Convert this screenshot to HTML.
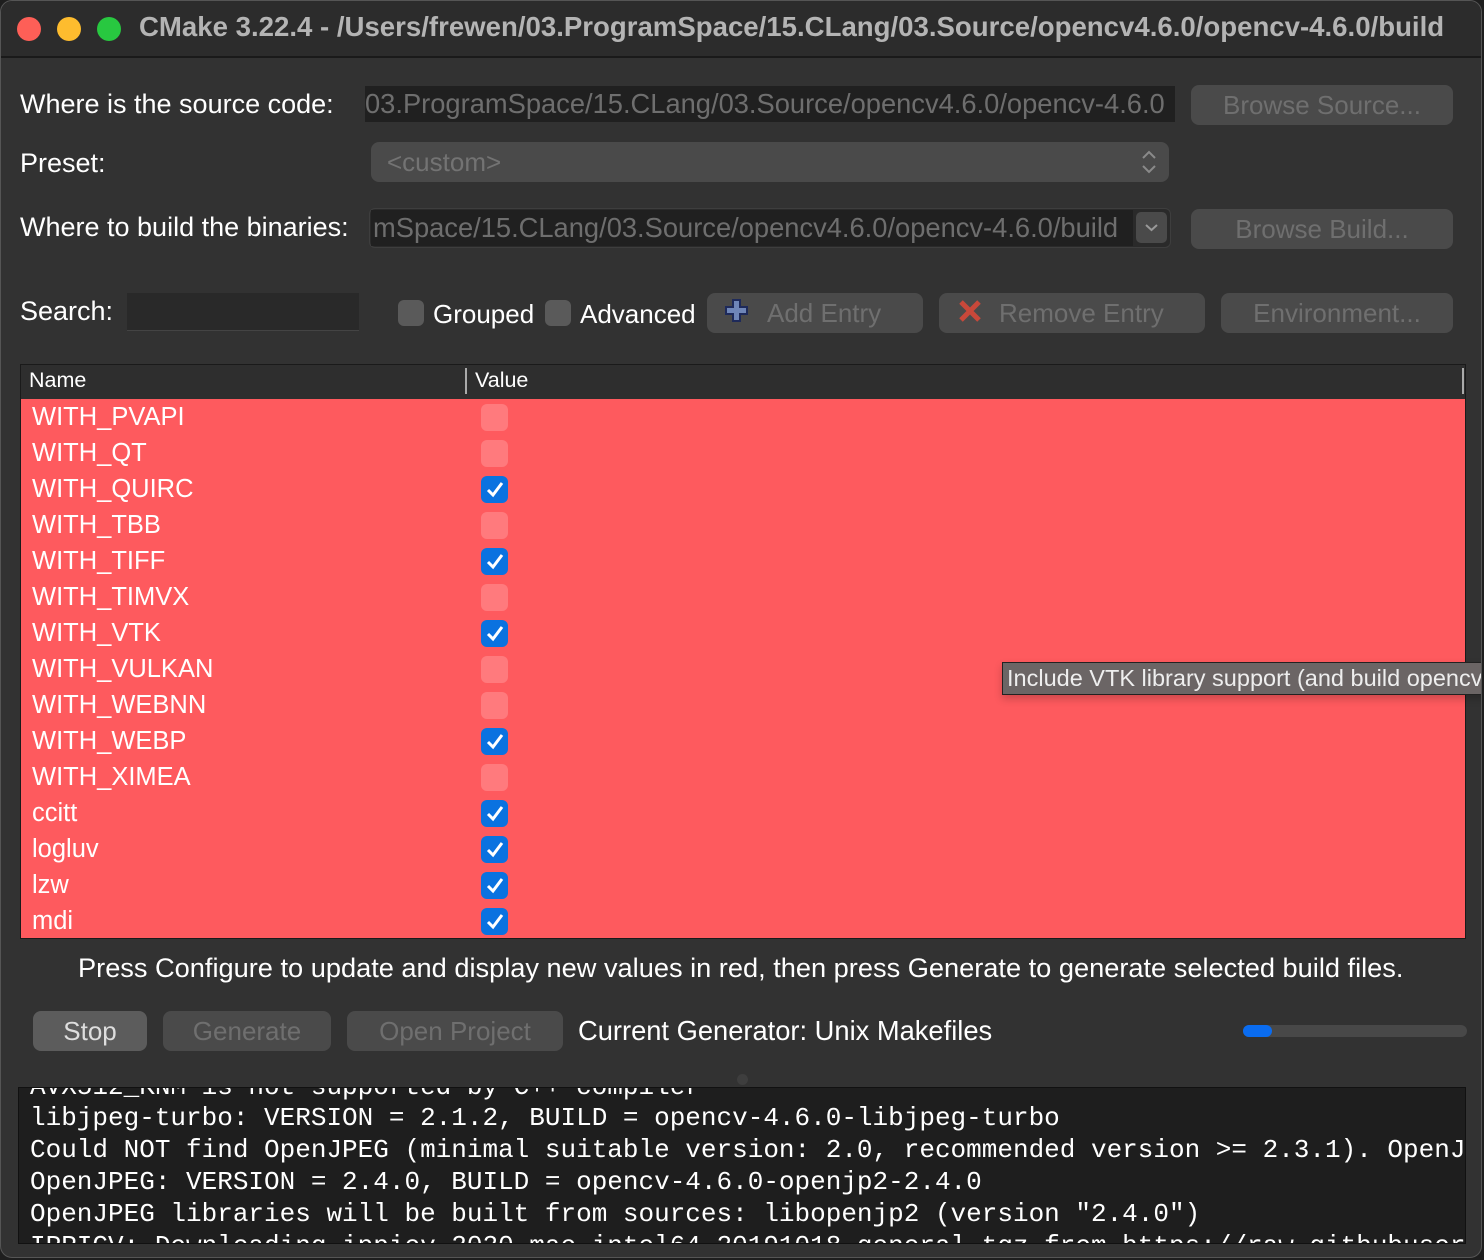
<!DOCTYPE html>
<html><head><meta charset="utf-8"><style>
*{box-sizing:border-box;margin:0;padding:0}
body{width:1484px;height:1260px;background:#1e1e1e;font-family:"Liberation Sans",sans-serif;overflow:hidden;position:relative}
.win{position:absolute;left:0;top:0;width:1482px;height:1258px;background:#323232;border-radius:12px;overflow:hidden;border:1px solid #555}
.title{position:absolute;left:0;top:0;width:100%;height:57px;background:#2c2c2c;border-bottom:2px solid #1a1a1a}
.dot{position:absolute;top:16px;width:24px;height:24px;border-radius:50%}
.ttext{position:absolute;left:138px;top:10px;color:#b4b4b4;font-weight:bold;font-size:27.6px;white-space:nowrap}
.a{position:absolute;white-space:nowrap}
.lbl{color:#fff;font-size:27px}
.field{background:#202020;color:#6e6e6e;font-size:27.3px;overflow:hidden;height:36px;line-height:36px}
.btn{position:absolute;background:#4a4a4a;border-radius:8px;color:#6f6f6f;font-size:26px;text-align:center;height:40px;line-height:40px}
.cb{position:absolute;width:26px;height:26px;border-radius:6px;background:#5a5a5a}
.row{position:absolute;left:31px;color:#fff;font-size:25.5px}
.rcb{position:absolute;left:480px;width:27px;height:27px;border-radius:6px;background:#ff7a7d}
.rcb.on{background:#0a72e0}
.mono{position:absolute;left:29px;font-family:"Liberation Mono",monospace;font-size:26px;color:#fff;white-space:nowrap}
</style></head><body>
<div class="win">
<div class="title">
<div class="dot" style="left:16px;background:#fe5f57"></div>
<div class="dot" style="left:56px;background:#febc2e"></div>
<div class="dot" style="left:96px;background:#28c840"></div>
<div class="ttext">CMake 3.22.4 - /Users/frewen/03.ProgramSpace/15.CLang/03.Source/opencv4.6.0/opencv-4.6.0/build</div>
</div>

<div class="a lbl" style="left:19px;top:88px">Where is the source code:</div>
<div class="a field" style="left:364px;top:85px;width:810px;padding-left:0">03.ProgramSpace/15.CLang/03.Source/opencv4.6.0/opencv-4.6.0</div>
<div class="btn" style="left:1190px;top:84px;width:262px">Browse Source...</div>

<div class="a lbl" style="left:19px;top:147px">Preset:</div>
<div class="a" style="left:370px;top:141px;width:798px;height:40px;background:#4a4a4a;border-radius:8px;color:#737373;font-size:26px;line-height:40px;padding-left:16px">&lt;custom&gt;
<svg style="position:absolute;right:12px;top:8px" width="16" height="24" viewBox="0 0 16 24"><path d="M2 8 L8 2 L14 8 M2 16 L8 22 L14 16" fill="none" stroke="#8a8a8a" stroke-width="2"/></svg></div>

<div class="a lbl" style="left:19px;top:211px">Where to build the binaries:</div>
<div class="a" style="left:368px;top:207px;width:802px;height:40px;background:#2a2a2a;border:1px solid #3e3e3e;border-radius:6px"></div>
<div class="a field" style="left:370px;top:209px;width:762px;padding-left:2px">mSpace/15.CLang/03.Source/opencv4.6.0/opencv-4.6.0/build</div>
<div class="a" style="left:1135px;top:211px;width:31px;height:31px;background:#4a4a4a;border-radius:5px"><svg width="31" height="31"><path d="M10 13 L15.5 18 L21 13" fill="none" stroke="#999" stroke-width="2"/></svg></div>
<div class="btn" style="left:1190px;top:208px;width:262px">Browse Build...</div>

<div class="a lbl" style="left:19px;top:295px">Search:</div>
<div class="a" style="left:126px;top:292px;width:232px;height:38px;background:#292929;border-bottom:1px solid #444"></div>
<div class="cb" style="left:397px;top:299px"></div>
<div class="a lbl" style="left:432px;top:298px;font-size:26px">Grouped</div>
<div class="cb" style="left:544px;top:299px"></div>
<div class="a lbl" style="left:579px;top:298px;font-size:26px">Advanced</div>
<div class="btn" style="left:706px;top:292px;width:216px;text-align:left;padding-left:60px">Add Entry</div>
<svg class="a" style="left:722px;top:296px" width="28" height="28" viewBox="0 0 28 28"><path d="M10 3h7v7h7v7h-7v7h-7v-7H3v-7h7z" fill="#6f86b8" stroke="#1e2a5a" stroke-width="2"/></svg>
<div class="btn" style="left:938px;top:292px;width:266px;text-align:left;padding-left:60px">Remove Entry</div>
<svg class="a" style="left:956px;top:297px" width="26" height="26" viewBox="0 0 26 26"><path d="M4 4L22 22M22 4L4 22" stroke="#c8483a" stroke-width="5"/></svg>
<div class="btn" style="left:1220px;top:292px;width:232px">Environment...</div>

<div class="a" style="left:19px;top:363px;width:1446px;height:575px;background:#fe5a5e;border:1px solid #1a1a1a"></div>
<div class="a" style="left:20px;top:364px;width:1444px;height:34px;background:#2e2e2e"></div>
<div class="a" style="left:28px;top:367px;color:#fff;font-size:21.5px">Name</div>
<div class="a" style="left:464px;top:367px;width:2px;height:26px;background:#aaa"></div>
<div class="a" style="left:474px;top:367px;color:#fff;font-size:21.5px">Value</div>
<div class="a" style="left:1461px;top:367px;width:2px;height:26px;background:#aaa"></div>

<div class="row" style="top:402px">WITH_PVAPI</div><div class="rcb" style="top:403px"></div>
<div class="row" style="top:438px">WITH_QT</div><div class="rcb" style="top:439px"></div>
<div class="row" style="top:474px">WITH_QUIRC</div><div class="rcb on" style="top:475px"><svg width="27" height="27"><path d="M7 14l5 5 9-12" fill="none" stroke="#fff" stroke-width="3"/></svg></div>
<div class="row" style="top:510px">WITH_TBB</div><div class="rcb" style="top:511px"></div>
<div class="row" style="top:546px">WITH_TIFF</div><div class="rcb on" style="top:547px"><svg width="27" height="27"><path d="M7 14l5 5 9-12" fill="none" stroke="#fff" stroke-width="3"/></svg></div>
<div class="row" style="top:582px">WITH_TIMVX</div><div class="rcb" style="top:583px"></div>
<div class="row" style="top:618px">WITH_VTK</div><div class="rcb on" style="top:619px"><svg width="27" height="27"><path d="M7 14l5 5 9-12" fill="none" stroke="#fff" stroke-width="3"/></svg></div>
<div class="row" style="top:654px">WITH_VULKAN</div><div class="rcb" style="top:655px"></div>
<div class="row" style="top:690px">WITH_WEBNN</div><div class="rcb" style="top:691px"></div>
<div class="row" style="top:726px">WITH_WEBP</div><div class="rcb on" style="top:727px"><svg width="27" height="27"><path d="M7 14l5 5 9-12" fill="none" stroke="#fff" stroke-width="3"/></svg></div>
<div class="row" style="top:762px">WITH_XIMEA</div><div class="rcb" style="top:763px"></div>
<div class="row" style="top:798px">ccitt</div><div class="rcb on" style="top:799px"><svg width="27" height="27"><path d="M7 14l5 5 9-12" fill="none" stroke="#fff" stroke-width="3"/></svg></div>
<div class="row" style="top:834px">logluv</div><div class="rcb on" style="top:835px"><svg width="27" height="27"><path d="M7 14l5 5 9-12" fill="none" stroke="#fff" stroke-width="3"/></svg></div>
<div class="row" style="top:870px">lzw</div><div class="rcb on" style="top:871px"><svg width="27" height="27"><path d="M7 14l5 5 9-12" fill="none" stroke="#fff" stroke-width="3"/></svg></div>
<div class="row" style="top:906px">mdi</div><div class="rcb on" style="top:907px"><svg width="27" height="27"><path d="M7 14l5 5 9-12" fill="none" stroke="#fff" stroke-width="3"/></svg></div>

<div class="a" style="left:1001px;top:661px;width:490px;height:33px;background:#6b6565;border:1px solid #222;color:#eee;font-size:23.5px;line-height:31px;padding-left:4px;overflow:hidden;box-shadow:0 4px 8px rgba(0,0,0,.2)">Include VTK library support (and build opencv_viz)</div>

<div class="a" style="left:77px;top:951px;color:#fff;font-size:27.2px">Press Configure to update and display new values in red, then press Generate to generate selected build files.</div>

<div class="btn" style="left:32px;top:1010px;width:114px;background:#5c5c5c;color:#ddd">Stop</div>
<div class="btn" style="left:162px;top:1010px;width:168px">Generate</div>
<div class="btn" style="left:346px;top:1010px;width:216px">Open Project</div>
<div class="a lbl" style="left:577px;top:1014px;font-size:27.3px">Current Generator: Unix Makefiles</div>
<div class="a" style="left:1242px;top:1024px;width:224px;height:12px;background:#484848;border-radius:6px"></div>
<div class="a" style="left:1242px;top:1024px;width:29px;height:12px;background:#0a6cf0;border-radius:6px"></div>
<div class="a" style="left:736px;top:1073px;width:11px;height:11px;border-radius:50%;background:#3e3e3e"></div>

<div class="a" style="left:17px;top:1086px;width:1448px;height:157px;background:#1e1e1e;border:1px solid #111;overflow:hidden">
<div class="mono" style="left:11px;top:-16px">AVX512_KNM is not supported by C++ compiler</div>
<div class="mono" style="left:11px;top:15px">libjpeg-turbo: VERSION = 2.1.2, BUILD = opencv-4.6.0-libjpeg-turbo</div>
<div class="mono" style="left:11px;top:47px">Could NOT find OpenJPEG (minimal suitable version: 2.0, recommended version &gt;= 2.3.1). OpenJPEG</div>
<div class="mono" style="left:11px;top:79px">OpenJPEG: VERSION = 2.4.0, BUILD = opencv-4.6.0-openjp2-2.4.0</div>
<div class="mono" style="left:11px;top:111px">OpenJPEG libraries will be built from sources: libopenjp2 (version "2.4.0")</div>
<div class="mono" style="left:11px;top:143px">IPPICV: Downloading ippicv_2020_mac_intel64_20191018_general.tgz from https://raw.githubusercon</div>
</div>
</div>
</body></html>
